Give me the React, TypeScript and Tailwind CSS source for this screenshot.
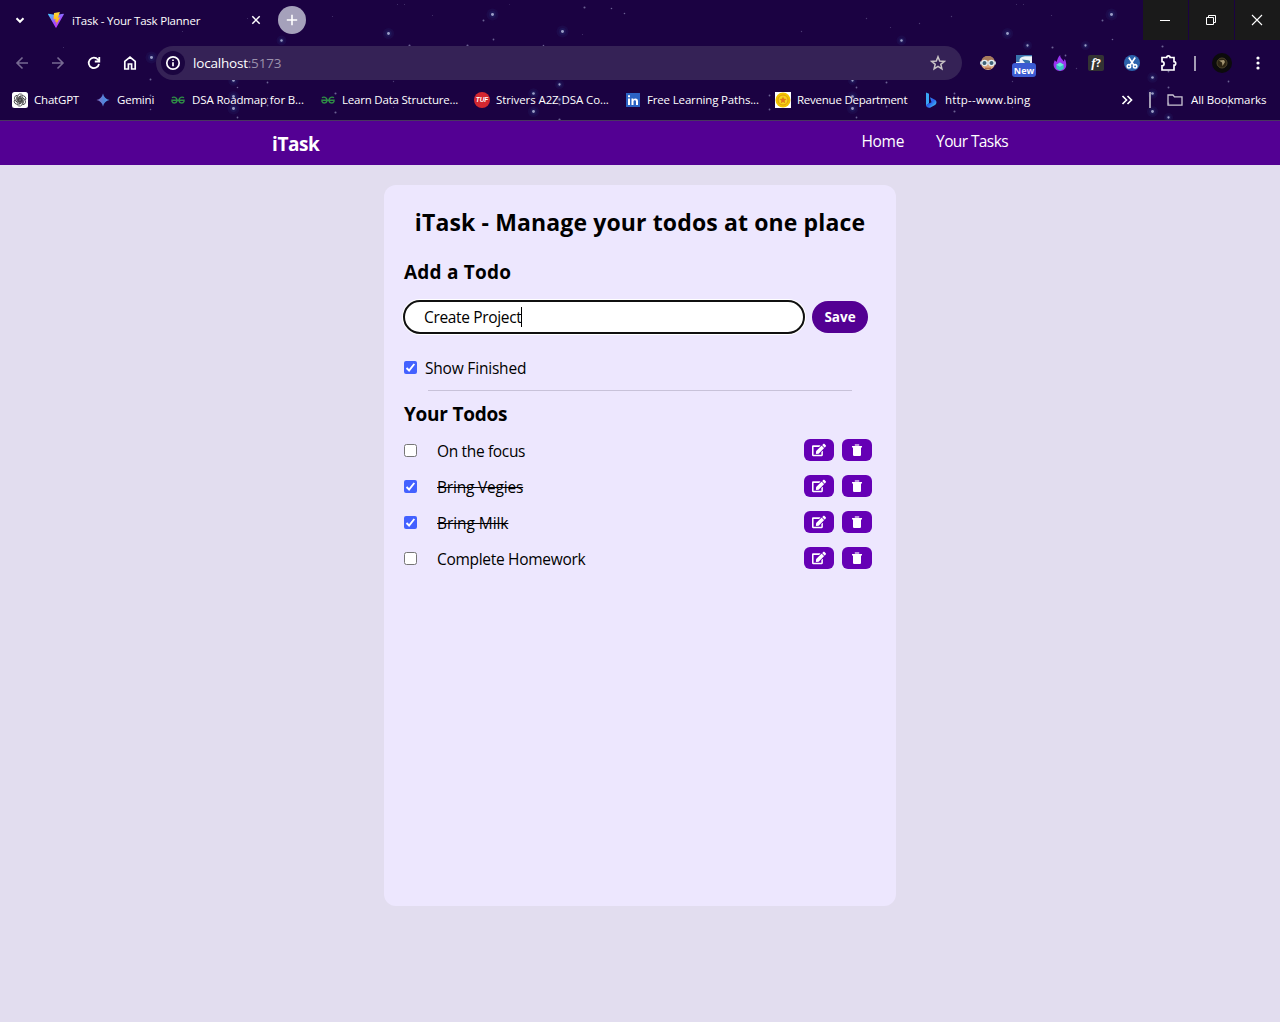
import type { ReactNode } from "react";
import { FaEdit } from "react-icons/fa";

const stars: [number, number, number][] = [
  [388, 33, 1.6], [409, 45, 1.2], [467, 45, 1.2], [492, 14, 1.7], [483, 20, 1.1], [493, 39, 1], [543, 45, 0.9],
  [562, 31, 1.7], [582, 34, 0.6], [584, 7, 1.2], [611, 8, 0.9], [624, 13, 0.9], [332, 16, 0.6], [432, 15, 0.6],
  [397, 4, 0.6], [404, 4, 0.6], [509, 4, 0.5], [281, 40, 1.4], [247, 18, 0.6], [182, 31, 0.6], [151, 57, 1.7],
  [150, 79, 1.1], [63, 47, 0.6], [150, 95, 1], [150, 109, 0.9], [233, 80, 1.5], [237, 87, 0.9], [267, 82, 1],
  [233, 96, 1.6], [233, 108, 1.7], [237, 117, 1], [267, 105, 1], [267, 98, 0.9], [335, 93, 1.2], [335, 112, 1.2],
  [393, 81, 0.8], [393, 107, 0.7], [533, 93, 1.5], [533, 111, 1.6], [559, 84, 1.3], [559, 99, 1.3], [559, 104, 1.2],
  [559, 119, 1.2], [801, 31, 0.8], [866, 18, 0.8], [890, 27, 0.7], [901, 40, 1.4], [919, 23, 0.8], [951, 16, 0.8],
  [769, 95, 1], [769, 109, 1], [852, 80, 1.3], [856, 87, 1], [886, 82, 1.1], [852, 96, 1.5], [852, 108, 1.6],
  [856, 117, 1], [886, 106, 1], [954, 93, 1.1], [954, 111, 1.2], [1007, 33, 1.6], [1027, 45, 1.3], [1052, 47, 1.2],
  [1085, 45, 1.3], [1065, 55, 1], [1111, 14, 1.7], [1102, 20, 1.1], [1112, 39, 0.9], [1051, 15, 0.7], [1016, 4, 0.6],
  [1023, 4, 0.6], [1162, 46, 1.2], [1076, 68, 0.8], [1152, 77, 1.5], [1168, 71, 1], [1168, 87, 1.1], [1152, 93, 1.5],
  [1152, 111, 1.6], [1168, 103, 1], [1168, 117, 1.3], [1228, 81, 1], [1228, 106, 1], [1012, 81, 0.8], [1012, 107, 0.8],
];

function Starfield() {
  return (
    <svg className="absolute inset-0" width="1280" height="120" aria-hidden="true">
      {stars.map(([x, y, r], i) => (
        <g key={i}>
          {r > 1.2 && <circle cx={x + 0.5} cy={y + 0.5} r={r * 3.5} fill="#3460a8" opacity="0.09" />}
          {r > 1.2 && <circle cx={x + 0.5} cy={y + 0.5} r={r * 2} fill="#3460a8" opacity="0.14" />}
          <circle cx={x + 0.5} cy={y + 0.5} r={r * 0.88} fill="#bcc2e4" opacity={r < 0.9 ? 0.3 : r < 1.3 ? 0.5 : 0.8} />
        </g>
      ))}
    </svg>
  );
}

function Glyph({ d, size = 16, width = 1.8, color = "#fff" }: { d: string; size?: number; width?: number; color?: string }) {
  return (
    <svg className="shrink-0" width={size} height={size} viewBox="0 0 16 16" fill="none" stroke={color} strokeWidth={width}>
      <path d={d} />
    </svg>
  );
}

function ViteLogo() {
  return (
    <svg width="16" height="16" viewBox="0 0 16 16">
      <defs>
        <linearGradient id="viteV" x1="0" y1="0" x2="0.7" y2="1">
          <stop offset="0" stopColor="#41d1ff" />
          <stop offset="0.6" stopColor="#a24bfe" />
          <stop offset="1" stopColor="#bd34fe" />
        </linearGradient>
        <linearGradient id="viteBolt" x1="0" y1="0" x2="0" y2="1">
          <stop offset="0" stopColor="#ffd83c" />
          <stop offset="1" stopColor="#ffa800" />
        </linearGradient>
      </defs>
      <path d="M15.8 2.4 8.4 15.6a.5.5 0 0 1-.8 0L.1 2.4a.4.4 0 0 1 .4-.6L8 3.1l7.300-1.300a.4.4 0 0 1 .5.600Z" fill="url(#viteV)" />
      <path d="m11.900.1-5.700 1a.3.3 0 0 0-.2.200l-.5 6.100 2.200-.4-.6 2.900 1.600-.4-.8 3.800 4.300-8-2.200.4Z" fill="url(#viteBolt)" />
    </svg>
  );
}

function OpenAILogo() {
  return (
    <svg width="16" height="16" viewBox="0 0 16 16">
      <rect width="16" height="16" rx="2.500" fill="#fff" />
      <g fill="none" stroke="#222" strokeWidth="0.7">
        {[0, 60, 120, 180, 240, 300].map((a) => (
          <path key={a} transform={`rotate(${a} 8 8)`} d="M8 6 11.200 7.800V10.900M5.600 4.400A2.700 2.700 0 0 1 10.600 3.200L7.300 5.100V8" />
        ))}
      </g>
    </svg>
  );
}

function GeminiLogo() {
  return (
    <svg width="16" height="16" viewBox="0 0 16 16">
      <defs>
        <linearGradient id="gem" x1="0" x2="1">
          <stop offset="0" stopColor="#8b72c8" />
          <stop offset="0.6" stopColor="#4f86dc" />
          <stop offset="1" stopColor="#58a0ee" />
        </linearGradient>
      </defs>
      <path d="M8 1.500Q9.200 6.800 14.500 8 9.200 9.200 8 14.500 6.800 9.200 1.500 8 6.800 6.800 8 1.500Z" fill="url(#gem)" />
    </svg>
  );
}

function GfgLogo() {
  return (
    <svg width="16" height="16" viewBox="0 0 16 16" fill="none" stroke="#2f8d46" strokeWidth="1.400">
      <path d="M2 5.800C3.500 4.600 7 5 7 8.200S3 11.700 2 9.500V8.200h12v1.300c-1 2.200-5 1.900-5-1.300s3.500-3.600 5-2.400" />
    </svg>
  );
}

function TufLogo() {
  return (
    <span className="flex size-4 items-center justify-center rounded-full bg-[#d32730] font-['Liberation_Sans'] text-[6.500px] font-bold italic text-white">
      TUF
    </span>
  );
}

function LinkedInLogo() {
  return (
    <svg width="14" height="14" viewBox="0 0 14 14">
      <rect width="14" height="14" fill="#2b63c4" />
      <path d="M2 5.500h2V12H2zM2 2.300h2v2H2zM5.500 5.500h1.900v.9c1-1.500 4.600-1.500 4.600 1.700V12h-2V8.600c0-2-2.500-1.800-2.500 0V12h-2z" fill="#fff" />
    </svg>
  );
}

function RevenueLogo() {
  return (
    <svg width="16" height="16" viewBox="0 0 16 16">
      <rect width="16" height="16" fill="#fff" />
      <circle cx="8" cy="8" r="7.500" fill="#f3c400" />
      <circle cx="8" cy="8" r="5" fill="#f7d51c" stroke="#e29a10" />
      <path d="m8 4.500 1 2.300 2.500.2-1.900 1.700.6 2.500L8 9.900l-2.200 1.300.6-2.500L4.500 7 7 6.800Z" fill="#e3781c" />
    </svg>
  );
}

function BingLogo() {
  return (
    <svg width="16" height="16" viewBox="0 0 16 16">
      <defs>
        <linearGradient id="bing" x1="0" y1="0" x2="1" y2="1">
          <stop offset="0" stopColor="#38a2f4" />
          <stop offset="0.500" stopColor="#2b62ef" />
          <stop offset="1" stopColor="#4be0f2" />
        </linearGradient>
      </defs>
      <path d="M3 .5 6 1.800v9.500l-3 2.200z" fill="#3aa7f5" />
      <path d="M7 5.200 12 7.700c2.200 1.300 1.700 4.200 0 5.300L7.500 15.500C5.500 16.200 3 15.200 3 13l5.500-2.800z" fill="url(#bing)" />
    </svg>
  );
}

const bookmarks: { label: string; width: string; track: string; icon: ReactNode }[] = [
  { label: "ChatGPT", width: "w-[83px]", track: "tracking-[-0.2px]", icon: <OpenAILogo /> },
  { label: "Gemini", width: "w-[75px]", track: "tracking-[-0.2px]", icon: <GeminiLogo /> },
  { label: "DSA Roadmap for B...", width: "w-[150px]", track: "tracking-[-0.13px]", icon: <GfgLogo /> },
  { label: "Learn Data Structure...", width: "w-[154px]", track: "tracking-[-0.21px]", icon: <GfgLogo /> },
  { label: "Strivers A2Z DSA Co...", width: "w-[151px]", track: "tracking-[-0.1px]", icon: <TufLogo /> },
  { label: "Free Learning Paths...", width: "w-[150px]", track: "tracking-[-0.16px]", icon: <LinkedInLogo /> },
  { label: "Revenue Department", width: "w-[148px]", track: "tracking-[-0.24px]", icon: <RevenueLogo /> },
  { label: "http--www.bing", width: "w-[196px]", track: "tracking-[0.2px]", icon: <BingLogo /> },
];

function TabStrip() {
  return (
    <div className="relative flex h-10 items-center">
      <div className="flex w-10 justify-center">
        <Glyph d="m4.500 6.300 3.500 3.500 3.500-3.500" width={2} />
      </div>
      <div className="ml-2 flex w-[216px] items-center">
        <ViteLogo />
        <span className="ml-2 mt-0.5 flex-1 whitespace-nowrap text-[11.500px] tracking-[-0.22px]">iTask - Your Task Planner</span>
        <Glyph d="m4.300 4.300 7.400 7.400m0-7.400-7.400 7.400" width={1.500} />
      </div>
      <div className="ml-3.5 flex size-7 items-center justify-center rounded-full bg-[#a5a1bb]">
        <Glyph d="M8 2.800v10.400M2.800 8h10.400" width={1.600} />
      </div>
      <div className="ml-auto flex h-10 gap-px">
        <div className="flex w-[45px] items-center justify-center bg-[#1a1a1a] pr-0.5">
          <Glyph d="M3 8.500h10" width={1} />
        </div>
        <div className="flex w-[45px] items-center justify-center bg-[#1a1a1a] pr-0.5">
          <Glyph d="M3.500 5.500h7v7h-7zM5.500 5.500v-2h7v7h-2" width={1} />
        </div>
        <div className="flex w-[45px] items-center justify-center bg-[#1a1a1a] pr-0.5">
          <Glyph d="m3 3 10 10m0-10L3 13" width={1.100} />
        </div>
      </div>
    </div>
  );
}

function Extensions() {
  return (
    <div className="flex items-center gap-5">
      <svg width="16" height="16" viewBox="0 0 16 16">
        <circle cx="8" cy="8" r="7" fill="#dba981" />
        <path d="M1.500 5.500a7 7 0 0 1 13 0Z" fill="#a77b5c" />
        <path d="M0 6.500h16v3H0z" fill="#b8c6cf" />
        <circle cx="4.500" cy="8" r="2.600" fill="#3e6377" stroke="#e5eef2" strokeWidth="1.200" />
        <circle cx="11.500" cy="8" r="2.600" fill="#3e6377" stroke="#e5eef2" strokeWidth="1.200" />
        <path d="M5 13.300h6" stroke="#a4603d" strokeWidth="1.200" />
      </svg>
      <div className="relative size-4">
        <svg width="16" height="16" viewBox="0 0 16 16">
          <path d="M0 0h16v9H0z" fill="#eef4f8" />
          <path d="M0 0h16v1.200H9C5.500 1.500 3.500 3 3.500 5v2H0z" fill="#3973ac" />
          <path d="M6 4.500c3 .5 6 0 8 1.500v2H9Z" fill="#3973ac" />
        </svg>
        <span className="absolute -left-1 top-2 flex h-[14px] w-6 items-center justify-center rounded-[3px] bg-[#3b5bd2] text-[9px] font-bold leading-none text-white">
          New
        </span>
      </div>
      <svg width="16" height="16" viewBox="0 0 16 16">
        <path d="M8.200 0c-.3 3 2.500 4 3.300 6.500L12.800 4c1.200 2.300 2 5.500 1.200 8a6.500 6.500 0 0 1-6 4 6.500 6.500 0 0 1-6-4C1 9 2 7 2.800 5.200L4.500 7C5.500 4.500 6 2 8.200 0Z" fill="#9a35ef" />
        <path d="m8 7.500 3.700 2.200v4L8 15.800l-3.700-2.100v-4Z" fill="#36c8c0" />
        <path d="m8 7.500 3.700 2.200L8 11.800 4.300 9.700Z" fill="#6eeadb" />
      </svg>
      <div className="flex size-4 items-center justify-center rounded-[2px] bg-[#333] pb-0.5 text-[11px] font-bold leading-none text-white">
        <span className="font-['Liberation_Serif'] text-[13px] italic">f</span>
        <span>?</span>
      </div>
      <svg width="16" height="16" viewBox="0 0 16 16">
        <circle cx="8" cy="8" r="8" fill="#2b62ab" />
        <g fill="none" stroke="#fff" strokeWidth="1.600">
          <path d="m4.800 2.500 5 7.500M11.200 2.500l-5 7.500" />
          <circle cx="4.900" cy="11.300" r="1.700" />
          <circle cx="11.100" cy="11.300" r="1.700" />
        </g>
      </svg>
    </div>
  );
}

function Toolbar() {
  return (
    <div className="relative flex h-[46px] items-center">
      <div className="flex w-[156px] items-center gap-5 pl-[14px]">
        <Glyph d="M14 8H3m5.500-5.500L3 8l5.500 5.500" width={1.600} color="#776a92" />
        <Glyph d="M2 8h11M7.500 2.500 13 8l-5.500 5.500" width={1.600} color="#776a92" />
        <Glyph d="M13 9A5.200 5.200 0 1 1 11.900 4.500L13 5.700M13.300 2v4.500H8.800" width={1.800} />
        <Glyph d="M2.800 14V6.300L8 2l5.200 4.300V14H9.600V9H6.400v5z" width={1.700} />
      </div>
      <div className="flex h-[34px] w-[806px] items-center rounded-full bg-[#352256] pl-[5px] pr-4">
        <div className="flex size-6 items-center justify-center rounded-full bg-[#1b0540]">
          <svg width="16" height="16" viewBox="0 0 16 16" fill="none" stroke="#fff" strokeWidth="1.700">
            <circle cx="8" cy="8" r="6.200" />
            <path d="M8 7.300v4M8 4.500v1.600" />
          </svg>
        </div>
        <span className="ml-2 flex-1 text-[13.500px] tracking-[-0.2px]">
          localhost<span className="text-[#9a90ab]">:5173</span>
        </span>
        <Glyph d="m8 1.800 1.700 4.300 4.600.3-3.500 2.900 1.100 4.500L8 11.400l-3.900 2.400 1.100-4.500-3.500-2.900 4.600-.3Z" width={1.500} color="#c9c4c6" />
      </div>
      <div className="ml-[18px] flex items-center">
        <Extensions />
        <svg className="ml-5" width="18" height="18" viewBox="0 0 18 18" fill="none" stroke="#fff" strokeWidth="1.700">
          <path d="M2 3.500h4.700a1.700 1.700 0 0 1 3.400 0H14v4.200a1.700 1.700 0 0 1 0 3.400V16H2v-4.200a2.100 2.100 0 0 0 0-4.200z" />
        </svg>
        <div className="ml-[16px] h-[15px] w-[2px] bg-[#a49db4]" />
        <div className="ml-4 flex size-5 items-center justify-center rounded-full bg-[#0c0b0c]">
          <svg width="12" height="12" viewBox="0 0 12 12">
            <circle cx="6" cy="6" r="5" fill="#2c2413" stroke="#4c432a" />
            <path d="M3 3.500 8 3l1 2-2.500 4L6 5.500z" fill="#a39571" />
          </svg>
        </div>
        <svg className="ml-[24px]" width="4" height="16" viewBox="0 0 4 16" fill="#fff">
          <circle cx="2" cy="3" r="1.600" />
          <circle cx="2" cy="8" r="1.600" />
          <circle cx="2" cy="13" r="1.600" />
        </svg>
      </div>
    </div>
  );
}

function BookmarksBar() {
  return (
    <div className="relative flex h-[34px] items-center whitespace-nowrap pb-[6px] pl-3 text-[11.500px]">
      {bookmarks.map((b) => (
        <div key={b.label} className={`flex shrink-0 items-center gap-1.5 ${b.width}`}>
          <span className="flex size-4 shrink-0 items-center justify-center">{b.icon}</span>
          <span className={b.track}>{b.label}</span>
        </div>
      ))}
      <div className="flex w-4 shrink-0 justify-center">
        <Glyph d="m3.500 4 4 4-4 4m5-8 4 4-4 4" width={1.700} />
      </div>
      <div className="ml-[14px] h-4 w-[2px] shrink-0 bg-[#a49db4]" />
      <div className="ml-4 flex items-center gap-2">
        <Glyph d="M1 3h5l1.500 1.800H15v8.400H1z" width={1.300} color="#cbc6d3" />
        <span className="tracking-[-0.1px]">All Bookmarks</span>
      </div>
    </div>
  );
}

const todos = [
  { text: "On the focus", done: false, track: "tracking-[-0.34px]" },
  { text: "Bring Vegies", done: true, track: "tracking-[-0.2px]" },
  { text: "Bring Milk", done: true, track: "tracking-[-0.07px]" },
  { text: "Complete Homework", done: false, track: "tracking-[-0.3px]" },
];

function Check({ checked }: { checked: boolean }) {
  return checked ? (
    <span className="-mt-px flex size-[13px] shrink-0 items-center justify-center rounded-[2px] bg-[#4361ff]">
      <svg width="11" height="11" viewBox="0 0 11 11" fill="none" stroke="#fff" strokeWidth="1.900">
        <path d="m1.500 6 2.600 2.500L9.300 2" />
      </svg>
    </span>
  ) : (
    <span className="-mt-px size-[13px] shrink-0 rounded-[2.500px] border border-[#767676] bg-white" />
  );
}

function TodoRow({ text, done, track }: { text: string; done: boolean; track: string }) {
  return (
    <div className="flex h-9 items-center">
      <Check checked={done} />
      <span className={`ml-5 flex-1 whitespace-nowrap text-[15.500px] leading-6 ${track} ${done ? "line-through" : ""}`}>{text}</span>
      <button className="-mt-0.5 flex h-[22px] w-[30px] items-center justify-center rounded-md bg-[#6500b5] text-white">
        <FaEdit size={14} />
      </button>
      <button className="-mt-0.5 ml-2 flex h-[22px] w-[30px] items-center justify-center rounded-md bg-[#6500b5] text-white">
        <svg width="14" height="14" viewBox="0 0 14 14" fill="#fff">
          <path d="M4.800 1h4.400v2.200H4.800z" opacity="0.600" />
          <path d="M2 3h10v1.500H2zM3 4.200h8v7.500a1.200 1.200 0 0 1-1.200 1.300H4.200A1.200 1.200 0 0 1 3 11.700z" />
        </svg>
      </button>
    </div>
  );
}

export default function App() {
  return (
    <div className="h-[1022px] w-[1280px] overflow-hidden bg-[#e2ddef] font-['Open_Sans',sans-serif] text-black">
      <header className="relative h-[121px] border-b border-[#48365f] bg-[#1b0242] text-white">
        <Starfield />
        <TabStrip />
        <Toolbar />
        <BookmarksBar />
      </header>
      <nav className="flex h-11 items-start justify-between bg-[#530093] px-[272px] text-white">
        <span className="mt-[9px] text-[19px] font-bold leading-7 tracking-[-0.4px]">iTask</span>
        <div className="mt-2 flex gap-8 text-[15.500px] leading-6">
          <span className="tracking-[-0.3px]">Home</span>
          <span className="tracking-[-0.6px]">Your Tasks</span>
        </div>
      </nav>
      <main className="mx-auto mt-5 h-[721px] w-[512px] rounded-xl bg-[#ede7fe] p-5">
        <h1 className="mt-px whitespace-nowrap text-center text-[23px] font-bold leading-8 tracking-[0.13px]">
          iTask - Manage your todos at one place
        </h1>
        <h2 className="mt-5 text-[19px] font-bold leading-7 tracking-[0.22px]">Add a Todo</h2>
        <div className="mt-[15px] flex h-8 items-center">
          <div className="flex h-8 w-[400px] items-center rounded-full bg-white pl-5 shadow-[0_0_0_2px_#fff] outline-2 -outline-offset-1 outline-[#101010]">
            <span className="mt-0.5 text-[15.500px] tracking-[-0.34px]">Create Project</span>
            <span className="h-5 w-px bg-black" />
          </div>
          <button className="ml-2 h-8 w-14 rounded-full bg-[#530093] text-[13.500px] font-bold text-white">Save</button>
        </div>
        <div className="mt-[23px] flex h-6 items-center">
          <Check checked />
          <span className="ml-2 mt-0.5 text-[15.500px] tracking-[-0.2px]">Show Finished</span>
        </div>
        <div className="ml-6 mt-[10px] h-px w-[424px] bg-[#c8c2d9]" />
        <h2 className="mt-[9px] text-[19px] font-bold leading-7 tracking-[-0.25px]">Your Todos</h2>
        <div className="mr-1 mt-[5px]">
          {todos.map((t) => (
            <TodoRow key={t.text} {...t} />
          ))}
        </div>
      </main>
    </div>
  );
}
